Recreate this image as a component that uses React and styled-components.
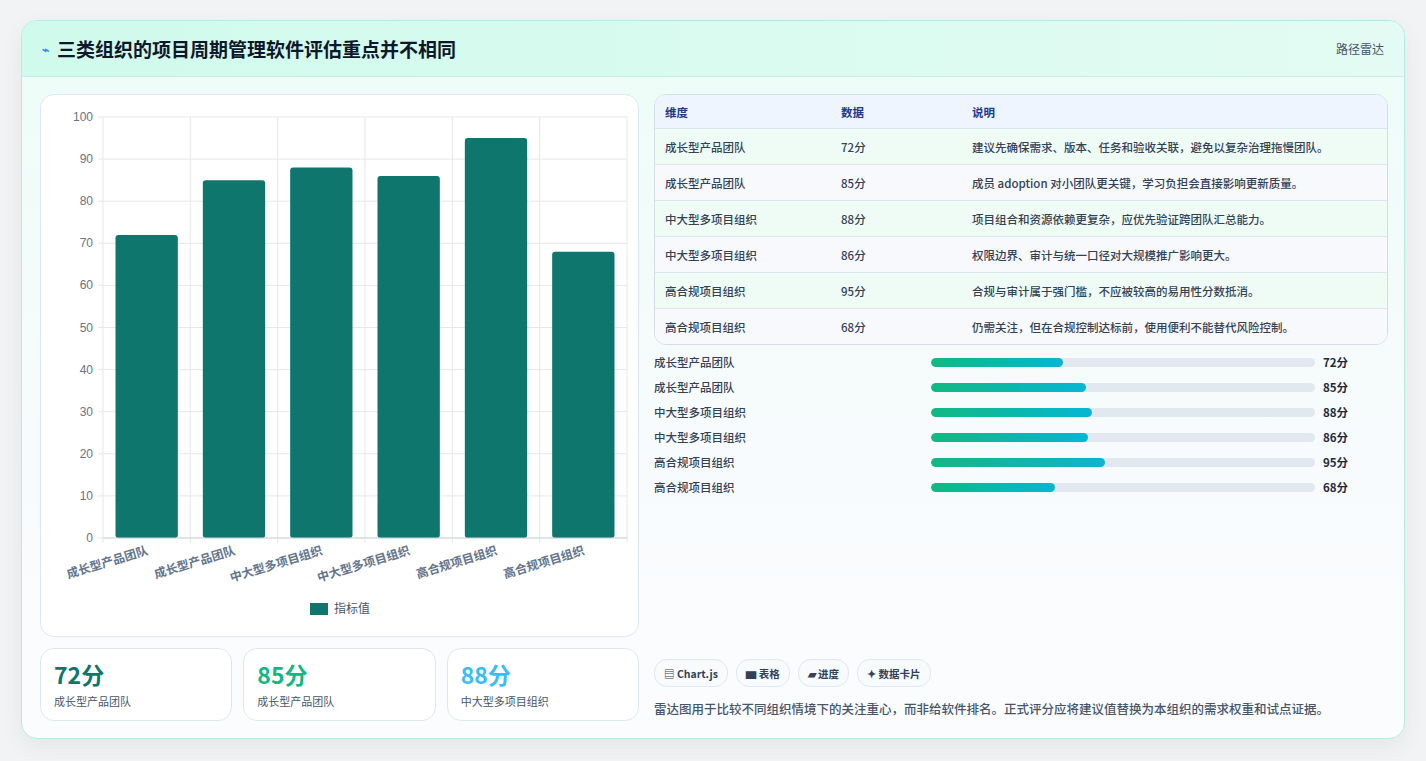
import React from "react";
import styled, { createGlobalStyle } from "styled-components";

const G = createGlobalStyle`
  body{margin:0;background:#f1f3f4;font-family:"Noto Sans CJK SC","Noto Sans",sans-serif;}
`;
const Page = styled.div`padding:20px 21px 21px 21px;`;
const Card = styled.div`
  width:1384px;height:719px;box-sizing:border-box;border:1px solid #b5ece0;border-radius:16px;
  background:linear-gradient(180deg,#ecfdf6 0%,#f8fbfd 60%,#fbfcfe 100%);overflow:hidden;
  box-shadow:0 8px 24px rgba(0,0,0,.06);display:flex;flex-direction:column;
`;
const Header = styled.div`
  height:55px;flex:none;display:flex;align-items:center;justify-content:space-between;padding:0 20px;
  background:linear-gradient(90deg,#cffaec,#e3fbf3);border-bottom:1px solid #c9efe4;
`;
const Title = styled.h1`margin:0;font-size:19px;font-weight:700;color:#0f172a;display:flex;align-items:center;gap:8px;`;
const Icon = styled.span`color:#3b82f6;font-size:12px;`;
const Tag = styled.span`font-size:12px;color:#475569;`;
const Body = styled.div`flex:1;display:grid;grid-template-columns:599px 734px;gap:15px;padding:17px 18px 0 18px;`;
const Left = styled.div`display:flex;flex-direction:column;gap:11px;`;
const ChartBox = styled.div`height:543px;box-sizing:border-box;background:#fff;border:1px solid #dfe7ee;border-radius:14px;`;
const Stats = styled.div`display:grid;grid-template-columns:repeat(3,1fr);gap:11px;`;
const Stat = styled.div`height:73px;box-sizing:border-box;background:#fff;border:1px solid #dfe7ee;border-radius:14px;padding:10px 13px;`;
const Big = styled.div`font-size:23px;font-weight:700;color:${p=>p.c};line-height:30px;`;
const Small = styled.div`font-size:11px;color:#475569;margin-top:4px;`;
const Right = styled.div`display:flex;flex-direction:column;`;
const Table = styled.div`border:1px solid #d5dee8;border-radius:12px;overflow:hidden;background:#fff;`;
const Row = styled.div`
  display:grid;grid-template-columns:176px 131px 1fr;height:${p=>p.h?33:35}px;align-items:center;padding:0 10px;
  font-size:11.5px;font-weight:${p=>p.h?700:500};color:${p=>p.h?"#1e3a8a":"#334155"};
  background:${p=>p.h?"#eef5fe":p.alt?"#f7f9fc":"#effcf6"};border-top:${p=>p.h?"none":"1px solid #dde5ee"};
`;
const Bars = styled.div`display:flex;flex-direction:column;gap:9px;margin-top:9px;`;
const BarRow = styled.div`display:grid;grid-template-columns:277px 384px 1fr;align-items:center;height:16px;font-size:11.5px;color:#334155;font-weight:500;`;
const Track = styled.div`height:9px;border-radius:5px;background:#e2e8f0;overflow:hidden;`;
const Fill = styled.div`height:100%;border-radius:5px;background:linear-gradient(90deg,#10b981,#06b6d4);`;
const Val = styled.span`padding-left:8px;font-weight:700;color:#1e293b;`;
const Spacer = styled.div`flex:1;`;
const Chips = styled.div`display:flex;gap:8px;`;
const Chip = styled.span`height:26px;display:inline-flex;align-items:center;padding:0 9px;border:1px solid #e2e8f0;border-radius:13px;background:#f8fafc;font-size:10.5px;font-weight:700;color:#334155;`;
const Foot = styled.p`margin:12px 0 20px;font-size:12.5px;color:#475569;font-weight:500;`;

const data=[["成长型产品团队",72,"建议先确保需求、版本、任务和验收关联，避免以复杂治理拖慢团队。"],["成长型产品团队",85,"成员 adoption 对小团队更关键，学习负担会直接影响更新质量。"],["中大型多项目组织",88,"项目组合和资源依赖更复杂，应优先验证跨团队汇总能力。"],["中大型多项目组织",86,"权限边界、审计与统一口径对大规模推广影响更大。"],["高合规项目组织",95,"合规与审计属于强门槛，不应被较高的易用性分数抵消。"],["高合规项目组织",68,"仍需关注，但在合规控制达标前，使用便利不能替代风险控制。"]];

function Chart(){
  const x0=62,x1=586,y0=22,y1=443,cw=(x1-x0)/6;
  const y=v=>y1-(v/100)*(y1-y0);
  return <svg width="599" height="543" style={{display:"block"}}>
    {[0,10,20,30,40,50,60,70,80,90,100].map(v=><g key={v}>
      <line x1={x0-5} x2={x1} y1={y(v)} y2={y(v)} stroke="#e5e7eb"/>
      <text x={x0-10} y={y(v)+4} textAnchor="end" fontSize="12" fill="#6b7280" fontFamily="Liberation Sans">{v}</text></g>)}
    {[0,1,2,3,4,5,6].map(i=><line key={i} x1={x0+i*cw} x2={x0+i*cw} y1={y0} y2={y1+5} stroke="#e5e7eb"/>)}
    {data.map((d,i)=>{const bx=x0+i*cw+12.5;return <g key={i}>
      <rect x={bx} y={y(d[1])} width={cw-25} height={y1-y(d[1])} rx="3" fill="#0f766e"/>
      <text transform={`translate(${x0+i*cw+cw/2+2},${y1+16}) rotate(-17)`} textAnchor="end" fontSize="12" fontWeight="700" fill="#64748b">{d[0]}</text></g>})}
    <line x1={x0} x2={x1} y1={y1} y2={y1} stroke="#cbd5e1"/>
    <rect x="269" y="508" width="18" height="12" fill="#0f766e"/>
    <text x="293" y="518" fontSize="12" fill="#475569">指标值</text>
  </svg>;
}

export default function App(){
  return <><G/><Page><Card>
    <Header><Title><Icon>⌁</Icon>三类组织的项目周期管理软件评估重点并不相同</Title><Tag>路径雷达</Tag></Header>
    <Body>
      <Left>
        <ChartBox><Chart/></ChartBox>
        <Stats>
          <Stat><Big c="#0f766e">72分</Big><Small>成长型产品团队</Small></Stat>
          <Stat><Big c="#10b981">85分</Big><Small>成长型产品团队</Small></Stat>
          <Stat><Big c="#38bdf8">88分</Big><Small>中大型多项目组织</Small></Stat>
        </Stats>
      </Left>
      <Right>
        <Table>
          <Row h><span>维度</span><span>数据</span><span>说明</span></Row>
          {data.map((d,i)=><Row key={i} alt={i%2}><span>{d[0]}</span><span>{d[1]}分</span><span>{d[2]}</span></Row>)}
        </Table>
        <Bars>{data.map((d,i)=><BarRow key={i}><span>{d[0]}</span><Track><Fill style={{width:`${d[1]/210*100}%`}}/></Track><Val>{d[1]}分</Val></BarRow>)}</Bars>
        <Spacer/>
        <Chips><Chip>▤ Chart.js</Chip><Chip>▆ 表格</Chip><Chip>▰ 进度</Chip><Chip>✦ 数据卡片</Chip></Chips>
        <Foot>雷达图用于比较不同组织情境下的关注重心，而非给软件排名。正式评分应将建议值替换为本组织的需求权重和试点证据。</Foot>
      </Right>
    </Body>
  </Card></Page></>;
}
